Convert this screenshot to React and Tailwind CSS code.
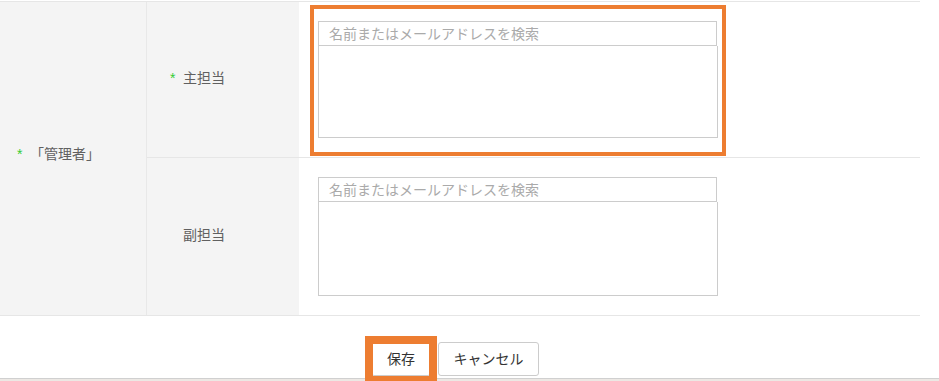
const font = "font-['Liberation_Sans','Noto_Sans_CJK_JP',sans-serif]";

function Label({ text, required }) {
  return (
    <div className="flex w-[152px] shrink-0 items-center bg-[#f4f4f4] pb-[4px] pl-[23px]">
      <span className="w-[13px] text-[14px] leading-none text-[#33cc33]">
        {required ? "*" : ""}
      </span>
      <span className="leading-none">{text}</span>
    </div>
  );
}

function Picker({ highlight, areaHeight }) {
  return (
    <div className="relative w-[400px]">
      <input
        className="block h-[25px] w-[399px] border border-[#cccccc] bg-white px-[10px] text-[14px] leading-none outline-none placeholder:text-[#aaaaaa]"
        placeholder="名前またはメールアドレスを検索"
      />
      <textarea
        className={`block w-[400px] resize-none border border-t-0 border-[#cccccc] bg-white outline-none ${areaHeight}`}
      />
      {highlight && (
        <div className="pointer-events-none absolute -top-[16px] -right-[8px] -bottom-[18px] -left-[8px] border-4 border-[#ed7d31]" />
      )}
    </div>
  );
}

export default function App() {
  return (
    <div
      className={`flex h-[381px] w-[939px] flex-col overflow-hidden bg-white text-[14px] text-[#606060] ${font}`}
    >
      <div className="pt-px">
        <div className="flex w-[920px] border-y border-[#e6e6e6]">
          <div className="flex w-[147px] shrink-0 items-center border-r border-[#e8e8e8] bg-[#f4f4f4] pb-[10px] pl-[17px]">
            <span className="w-[13px] text-[14px] leading-none text-[#33cc33]">*</span>
            <span className="leading-none">「管理者」</span>
          </div>
          <div className="flex flex-1 flex-col">
            <div className="flex h-[155px]">
              <Label text="主担当" required />
              <div className="flex-1 pl-[19px] pt-[19px]">
                <Picker highlight areaHeight="h-[92px]" />
              </div>
            </div>
            <div className="h-px bg-[#e6e6e6]" />
            <div className="flex h-[157px]">
              <Label text="副担当" />
              <div className="flex-1 pl-[19px] pt-[19px]">
                <Picker areaHeight="h-[94px]" />
              </div>
            </div>
          </div>
        </div>
      </div>

      <div className="flex h-[62px] w-[910px] justify-center gap-[7px] pt-[26px]">
        <div className="relative">
          <button className="h-[34px] w-[60px] rounded-[3px] border border-[#cccccc] bg-white text-[14px] text-[#333333]">
            保存
          </button>
          <div className="pointer-events-none absolute -inset-[6px] z-10 border-8 border-[#ed7d31]" />
        </div>
        <button className="h-[34px] w-[101px] rounded-[3px] border border-[#cccccc] bg-white text-[14px] text-[#333333]">
          キャンセル
        </button>
      </div>

      <div className="h-[3px] border-t border-[#d0d0d0] bg-[#ece8e4]" />
    </div>
  );
}
